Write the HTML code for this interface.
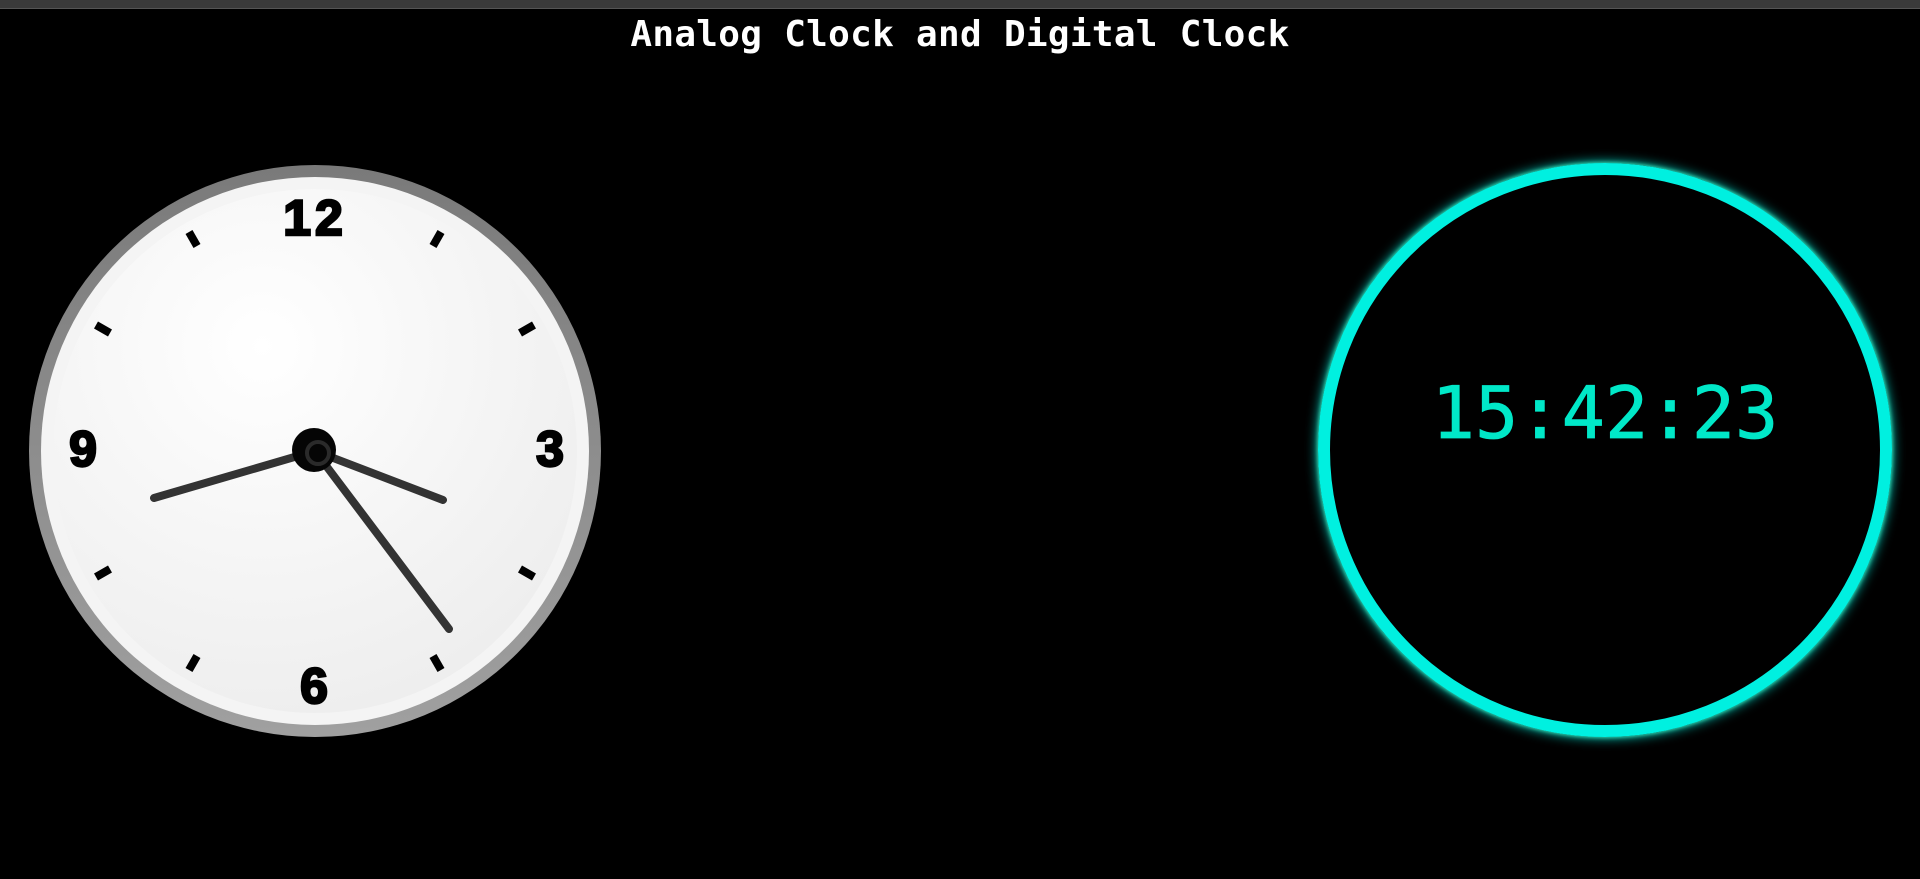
<!DOCTYPE html>
<html><head><meta charset="utf-8"><style>
html,body{margin:0;padding:0;background:#000;width:1920px;height:879px;overflow:hidden}
.bar{position:absolute;left:0;top:0;width:1920px;height:8px;background:#3a3a3a;border-bottom:1px solid #555}
h1{position:absolute;top:14px;left:0;width:1920px;margin:0;text-align:center;color:#fff;font:bold 36px "DejaVu Sans Mono","Liberation Mono",monospace;letter-spacing:0.3px}
.dig{position:absolute;left:1318px;top:163px;width:550px;height:550px;border:12px solid #00f0e0;border-radius:50%;box-shadow:0 0 12px #00f0e0,0 0 4px #7ff0a0}
.dig span{position:absolute;left:0;width:550px;top:196px;text-align:center;color:#00e8c8;font:72px "DejaVu Sans Mono","Liberation Mono",monospace;-webkit-text-stroke:0.8px #00e8c8}
</style></head><body>
<div class="bar"></div>
<h1>Analog Clock and Digital Clock</h1>
<svg width="1920" height="879" style="position:absolute;left:0;top:0">
<defs>
<linearGradient id="rim" x1="0" y1="0" x2="0" y2="1"><stop offset="0" stop-color="#7a7a7a"/><stop offset="1" stop-color="#a0a0a0"/></linearGradient>
<radialGradient id="face" cx="0.4" cy="0.3" r="0.8"><stop offset="0" stop-color="#ffffff"/><stop offset="1" stop-color="#ececec"/></radialGradient>
</defs>
<circle cx="315" cy="451" r="286" fill="url(#rim)"/>
<circle cx="315" cy="451" r="274" fill="#f4f4f4"/>
<circle cx="315" cy="451" r="262" fill="url(#face)"/>
<g stroke="#000" stroke-width="8">
<line x1="189" y1="232" x2="197" y2="246"/>
<line x1="441" y1="232" x2="433" y2="246"/>
<line x1="96" y1="325" x2="110" y2="333"/>
<line x1="534" y1="325" x2="520" y2="333"/>
<line x1="96" y1="577" x2="110" y2="569"/>
<line x1="534" y1="577" x2="520" y2="569"/>
<line x1="189" y1="670" x2="197" y2="656"/>
<line x1="441" y1="670" x2="433" y2="656"/>
</g>
<g font-family="'Liberation Sans',Arial,sans-serif" font-weight="bold" font-size="50" text-anchor="middle" fill="#000" stroke="#000" stroke-width="2.5">
<text x="315" y="235" letter-spacing="4">12</text>
<text x="550" y="466">3</text>
<text x="314" y="703">6</text>
<text x="83" y="466">9</text>
</g>
<g stroke="#333" stroke-width="8" stroke-linecap="round">
<line x1="315" y1="451" x2="443" y2="500"/>
<line x1="315" y1="451" x2="154" y2="498"/>
<line x1="315" y1="451" x2="449" y2="629"/>
</g>
<circle cx="314" cy="450" r="22" fill="#050505"/>
<circle cx="318" cy="453" r="11" fill="none" stroke="#2a2a2a" stroke-width="4"/>
</svg>
<div class="dig"><span>15:42:23</span></div>
</body></html>
